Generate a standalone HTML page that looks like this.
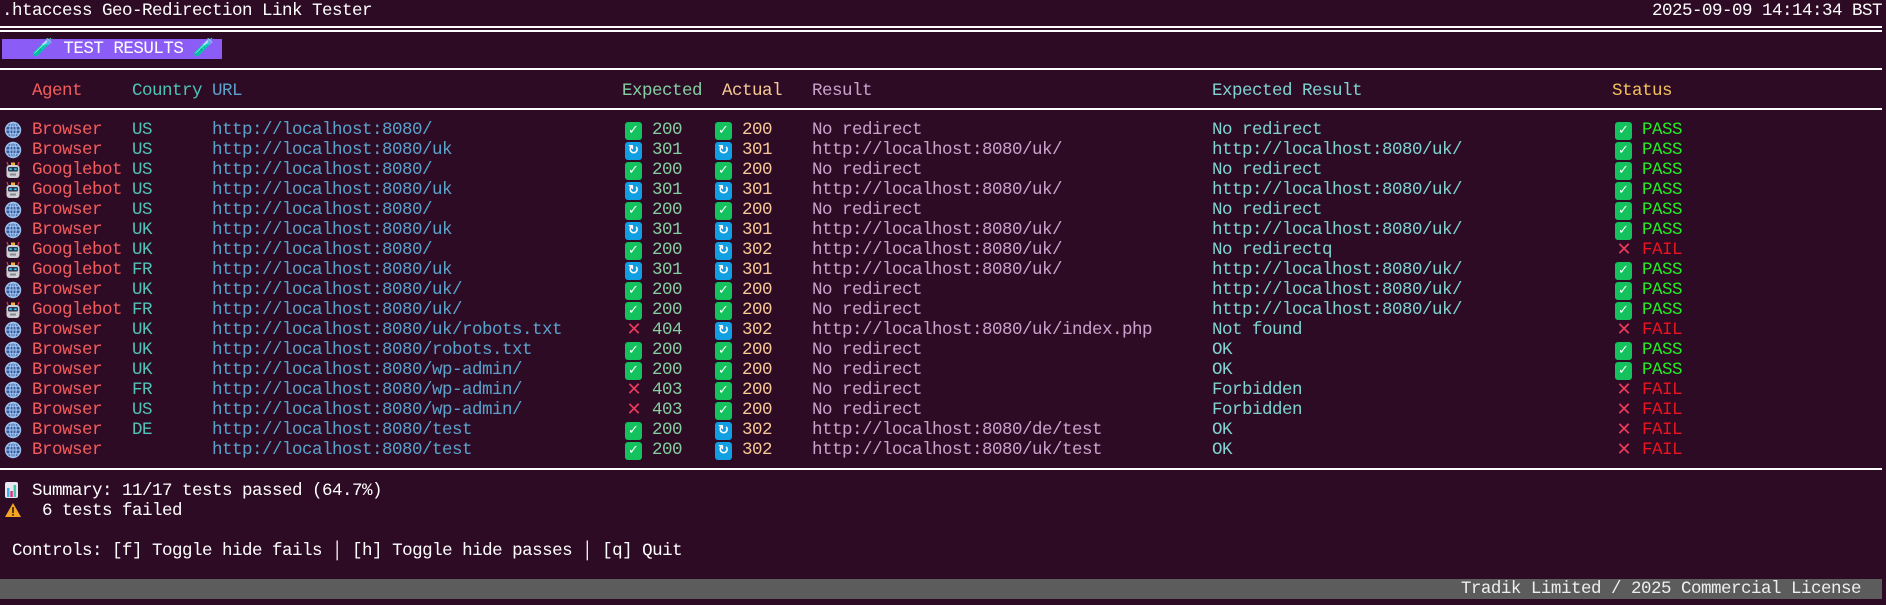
<!DOCTYPE html>
<html><head><meta charset="utf-8"><style>
body{margin:0;width:1886px;height:605px;background:#2e0b25;overflow:hidden;font-family:"Liberation Mono","DejaVu Sans Mono",monospace;font-size:17.5px;letter-spacing:-0.5px;color:#fff;position:relative}
.a{position:absolute;white-space:pre;line-height:20px}
.hl{position:absolute;left:0;width:1882px;height:2px;background:#fff}
.r{position:absolute;left:0;width:1886px;height:20px}
.r>span{position:absolute;top:0;line-height:20px;white-space:pre}
.ic{left:4px;top:1px!important;width:18px;height:18px}
.ag{left:32px;color:#f25c5c}.co{left:132px;color:#4ec3b6}.ur{left:212px;color:#5aa2cc}
.ei{left:625px}.en{left:652px;color:#84cfa2}.ai{left:715px}.an{left:742px;color:#f7c995}
.re{left:812px;color:#caa2cb}.er{left:1212px;color:#7fd3d0}.si{left:1615px}.st{left:1642px}
.P{color:#22ee22}.F{color:#e8141e}
.ok,.rf{display:inline-block;width:17px;height:18px;border-radius:3px;margin-top:1px;color:#fff;font-size:13px;line-height:18px;text-align:center;font-family:"DejaVu Sans",sans-serif;font-weight:bold;letter-spacing:0}
.ok{background:#13c25c}.rf{background:#119fe4}
.x{display:inline-block;width:18px;text-align:center;color:#ec3a5c;font-family:"DejaVu Sans",sans-serif;font-weight:bold;font-size:18px;letter-spacing:0}
</style></head><body>
<svg width="0" height="0" style="position:absolute"><defs>
<symbol id="g" viewBox="0 0 18 18"><circle cx="9" cy="9" r="7.5" fill="#3a5a9a" stroke="#9cc4f0" stroke-width="1.4"/><ellipse cx="9" cy="9" rx="3.2" ry="7.5" fill="none" stroke="#9cc4f0" stroke-width="1.2"/><path d="M9 1.5V16.5M1.5 9H16.5M2.8 5.2H15.2M2.8 12.8H15.2" stroke="#9cc4f0" stroke-width="1.1"/></symbol>
<symbol id="b" viewBox="0 0 18 18"><path d="M3 1L4 4M15 1L14 4" stroke="#e04040" stroke-width="1.2"/><rect x="7" y="1.5" width="4" height="2.5" fill="#f0b030"/><rect x="2.5" y="4" width="13" height="13" rx="3" fill="#cfcfd4"/><rect x="4" y="6" width="10" height="4.5" rx="1.5" fill="#2a3550"/><rect x="5.3" y="7.3" width="2.5" height="1.8" fill="#38c8f0"/><rect x="10.2" y="7.3" width="2.5" height="1.8" fill="#38c8f0"/><rect x="6" y="12.5" width="6" height="2" fill="#8a8a94"/></symbol>
</defs></svg>
<div class="a" style="left:2px;top:1px">.htaccess Geo-Redirection Link Tester</div>
<div class="a" style="right:4px;top:1px">2025-09-09 14:14:34 BST</div>
<div class="hl" style="top:26px"></div><div class="hl" style="top:30px"></div>
<div class="a" style="left:2px;top:39px;width:220px;height:20px;background:#8b5cf6;line-height:20px">   <span style="color:#b8f040">🧪</span> TEST RESULTS <span style="color:#b8f040">🧪</span></div>
<div class="hl" style="top:68px"></div>
<div class="a" style="left:32px;top:81px;color:#f25c5c">Agent</div>
<div class="a" style="left:132px;top:81px;color:#4ec3b6">Country</div>
<div class="a" style="left:212px;top:81px;color:#5aa2cc">URL</div>
<div class="a" style="left:622px;top:81px;color:#84cfa2">Expected</div>
<div class="a" style="left:722px;top:81px;color:#f7c995">Actual</div>
<div class="a" style="left:812px;top:81px;color:#caa2cb">Result</div>
<div class="a" style="left:1212px;top:81px;color:#7fd3d0">Expected Result</div>
<div class="a" style="left:1612px;top:81px;color:#f2c25c">Status</div>
<div class="hl" style="top:108px"></div>

<div class="r" style="top:120px"><svg class="ic" style="position:absolute;left:4px;top:1px"><use href="#g"/></svg><span class="ag">Browser</span><span class="co">US</span><span class="ur">http://localhost:8080/</span><span class="ei"><span class="ok">✓</span></span><span class="en">200</span><span class="ai"><span class="ok">✓</span></span><span class="an">200</span><span class="re">No redirect</span><span class="er">No redirect</span><span class="si"><span class="ok">✓</span></span><span class="st P">PASS</span></div>
<div class="r" style="top:140px"><svg class="ic" style="position:absolute;left:4px;top:1px"><use href="#g"/></svg><span class="ag">Browser</span><span class="co">US</span><span class="ur">http://localhost:8080/uk</span><span class="ei"><span class="rf">↻</span></span><span class="en">301</span><span class="ai"><span class="rf">↻</span></span><span class="an">301</span><span class="re">http://localhost:8080/uk/</span><span class="er">http://localhost:8080/uk/</span><span class="si"><span class="ok">✓</span></span><span class="st P">PASS</span></div>
<div class="r" style="top:160px"><svg class="ic" style="position:absolute;left:4px;top:1px"><use href="#b"/></svg><span class="ag">Googlebot</span><span class="co">US</span><span class="ur">http://localhost:8080/</span><span class="ei"><span class="ok">✓</span></span><span class="en">200</span><span class="ai"><span class="ok">✓</span></span><span class="an">200</span><span class="re">No redirect</span><span class="er">No redirect</span><span class="si"><span class="ok">✓</span></span><span class="st P">PASS</span></div>
<div class="r" style="top:180px"><svg class="ic" style="position:absolute;left:4px;top:1px"><use href="#b"/></svg><span class="ag">Googlebot</span><span class="co">US</span><span class="ur">http://localhost:8080/uk</span><span class="ei"><span class="rf">↻</span></span><span class="en">301</span><span class="ai"><span class="rf">↻</span></span><span class="an">301</span><span class="re">http://localhost:8080/uk/</span><span class="er">http://localhost:8080/uk/</span><span class="si"><span class="ok">✓</span></span><span class="st P">PASS</span></div>
<div class="r" style="top:200px"><svg class="ic" style="position:absolute;left:4px;top:1px"><use href="#g"/></svg><span class="ag">Browser</span><span class="co">US</span><span class="ur">http://localhost:8080/</span><span class="ei"><span class="ok">✓</span></span><span class="en">200</span><span class="ai"><span class="ok">✓</span></span><span class="an">200</span><span class="re">No redirect</span><span class="er">No redirect</span><span class="si"><span class="ok">✓</span></span><span class="st P">PASS</span></div>
<div class="r" style="top:220px"><svg class="ic" style="position:absolute;left:4px;top:1px"><use href="#g"/></svg><span class="ag">Browser</span><span class="co">UK</span><span class="ur">http://localhost:8080/uk</span><span class="ei"><span class="rf">↻</span></span><span class="en">301</span><span class="ai"><span class="rf">↻</span></span><span class="an">301</span><span class="re">http://localhost:8080/uk/</span><span class="er">http://localhost:8080/uk/</span><span class="si"><span class="ok">✓</span></span><span class="st P">PASS</span></div>
<div class="r" style="top:240px"><svg class="ic" style="position:absolute;left:4px;top:1px"><use href="#b"/></svg><span class="ag">Googlebot</span><span class="co">UK</span><span class="ur">http://localhost:8080/</span><span class="ei"><span class="ok">✓</span></span><span class="en">200</span><span class="ai"><span class="rf">↻</span></span><span class="an">302</span><span class="re">http://localhost:8080/uk/</span><span class="er">No redirectq</span><span class="si"><span class="x">✕</span></span><span class="st F">FAIL</span></div>
<div class="r" style="top:260px"><svg class="ic" style="position:absolute;left:4px;top:1px"><use href="#b"/></svg><span class="ag">Googlebot</span><span class="co">FR</span><span class="ur">http://localhost:8080/uk</span><span class="ei"><span class="rf">↻</span></span><span class="en">301</span><span class="ai"><span class="rf">↻</span></span><span class="an">301</span><span class="re">http://localhost:8080/uk/</span><span class="er">http://localhost:8080/uk/</span><span class="si"><span class="ok">✓</span></span><span class="st P">PASS</span></div>
<div class="r" style="top:280px"><svg class="ic" style="position:absolute;left:4px;top:1px"><use href="#g"/></svg><span class="ag">Browser</span><span class="co">UK</span><span class="ur">http://localhost:8080/uk/</span><span class="ei"><span class="ok">✓</span></span><span class="en">200</span><span class="ai"><span class="ok">✓</span></span><span class="an">200</span><span class="re">No redirect</span><span class="er">http://localhost:8080/uk/</span><span class="si"><span class="ok">✓</span></span><span class="st P">PASS</span></div>
<div class="r" style="top:300px"><svg class="ic" style="position:absolute;left:4px;top:1px"><use href="#b"/></svg><span class="ag">Googlebot</span><span class="co">FR</span><span class="ur">http://localhost:8080/uk/</span><span class="ei"><span class="ok">✓</span></span><span class="en">200</span><span class="ai"><span class="ok">✓</span></span><span class="an">200</span><span class="re">No redirect</span><span class="er">http://localhost:8080/uk/</span><span class="si"><span class="ok">✓</span></span><span class="st P">PASS</span></div>
<div class="r" style="top:320px"><svg class="ic" style="position:absolute;left:4px;top:1px"><use href="#g"/></svg><span class="ag">Browser</span><span class="co">UK</span><span class="ur">http://localhost:8080/uk/robots.txt</span><span class="ei"><span class="x">✕</span></span><span class="en">404</span><span class="ai"><span class="rf">↻</span></span><span class="an">302</span><span class="re">http://localhost:8080/uk/index.php</span><span class="er">Not found</span><span class="si"><span class="x">✕</span></span><span class="st F">FAIL</span></div>
<div class="r" style="top:340px"><svg class="ic" style="position:absolute;left:4px;top:1px"><use href="#g"/></svg><span class="ag">Browser</span><span class="co">UK</span><span class="ur">http://localhost:8080/robots.txt</span><span class="ei"><span class="ok">✓</span></span><span class="en">200</span><span class="ai"><span class="ok">✓</span></span><span class="an">200</span><span class="re">No redirect</span><span class="er">OK</span><span class="si"><span class="ok">✓</span></span><span class="st P">PASS</span></div>
<div class="r" style="top:360px"><svg class="ic" style="position:absolute;left:4px;top:1px"><use href="#g"/></svg><span class="ag">Browser</span><span class="co">UK</span><span class="ur">http://localhost:8080/wp-admin/</span><span class="ei"><span class="ok">✓</span></span><span class="en">200</span><span class="ai"><span class="ok">✓</span></span><span class="an">200</span><span class="re">No redirect</span><span class="er">OK</span><span class="si"><span class="ok">✓</span></span><span class="st P">PASS</span></div>
<div class="r" style="top:380px"><svg class="ic" style="position:absolute;left:4px;top:1px"><use href="#g"/></svg><span class="ag">Browser</span><span class="co">FR</span><span class="ur">http://localhost:8080/wp-admin/</span><span class="ei"><span class="x">✕</span></span><span class="en">403</span><span class="ai"><span class="ok">✓</span></span><span class="an">200</span><span class="re">No redirect</span><span class="er">Forbidden</span><span class="si"><span class="x">✕</span></span><span class="st F">FAIL</span></div>
<div class="r" style="top:400px"><svg class="ic" style="position:absolute;left:4px;top:1px"><use href="#g"/></svg><span class="ag">Browser</span><span class="co">US</span><span class="ur">http://localhost:8080/wp-admin/</span><span class="ei"><span class="x">✕</span></span><span class="en">403</span><span class="ai"><span class="ok">✓</span></span><span class="an">200</span><span class="re">No redirect</span><span class="er">Forbidden</span><span class="si"><span class="x">✕</span></span><span class="st F">FAIL</span></div>
<div class="r" style="top:420px"><svg class="ic" style="position:absolute;left:4px;top:1px"><use href="#g"/></svg><span class="ag">Browser</span><span class="co">DE</span><span class="ur">http://localhost:8080/test</span><span class="ei"><span class="ok">✓</span></span><span class="en">200</span><span class="ai"><span class="rf">↻</span></span><span class="an">302</span><span class="re">http://localhost:8080/de/test</span><span class="er">OK</span><span class="si"><span class="x">✕</span></span><span class="st F">FAIL</span></div>
<div class="r" style="top:440px"><svg class="ic" style="position:absolute;left:4px;top:1px"><use href="#g"/></svg><span class="ag">Browser</span><span class="ur">http://localhost:8080/test</span><span class="ei"><span class="ok">✓</span></span><span class="en">200</span><span class="ai"><span class="rf">↻</span></span><span class="an">302</span><span class="re">http://localhost:8080/uk/test</span><span class="er">OK</span><span class="si"><span class="x">✕</span></span><span class="st F">FAIL</span></div>

<div class="hl" style="top:468px"></div>
<svg style="position:absolute;left:5px;top:482px" width="13" height="16" viewBox="0 0 13 16"><rect width="13" height="16" rx="2" fill="#e8e8f0"/><rect x="2" y="6" width="2.5" height="9" fill="#30b8e0"/><rect x="5.3" y="9" width="2.5" height="6" fill="#e03090"/><rect x="8.6" y="3" width="2.5" height="12" fill="#40c8a0"/></svg>
<div class="a" style="left:32px;top:481px">Summary: 11/17 tests passed (64.7%)</div>
<svg style="position:absolute;left:4px;top:502px" width="18" height="16" viewBox="0 0 18 16"><path d="M9 1L17 15H1Z" fill="#f5a623"/><rect x="8.2" y="5" width="1.6" height="6" fill="#2a1a00"/><rect x="8.2" y="12" width="1.6" height="1.6" fill="#2a1a00"/></svg>
<div class="a" style="left:42px;top:501px">6 tests failed</div>
<div class="a" style="left:12px;top:541px">Controls: [f] Toggle hide fails │ [h] Toggle hide passes │ [q] Quit</div>
<div class="a" style="left:0;top:579px;width:1882px;height:20px;background:#5c5c5c;color:#eee;text-align:right"><span style="padding-right:21px">Tradik Limited / 2025 Commercial License</span></div>
</body></html>
